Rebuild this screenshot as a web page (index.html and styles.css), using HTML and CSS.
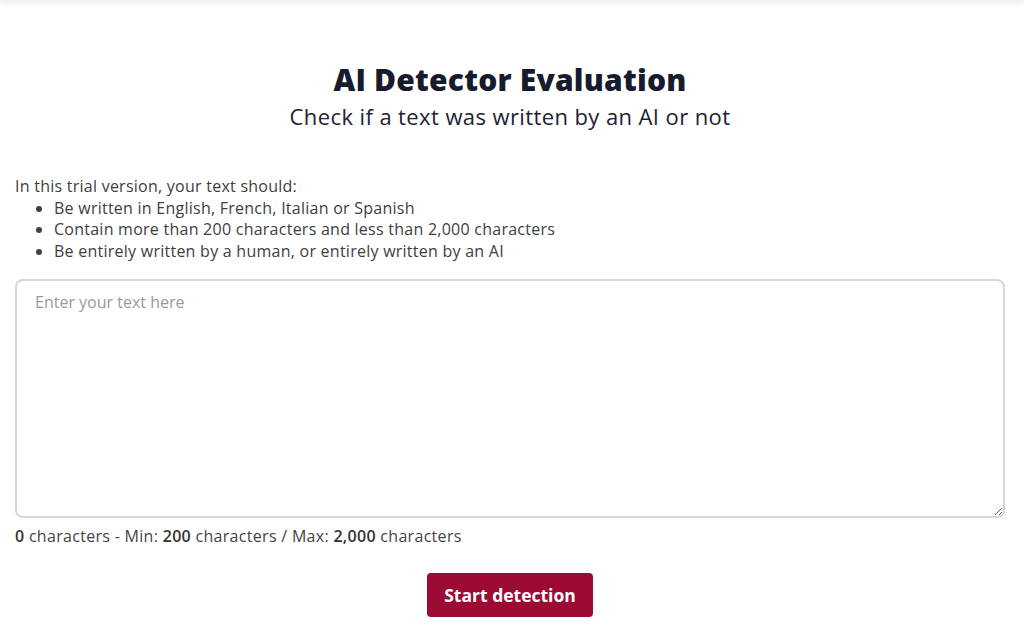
FILE: index.html
```html
<!DOCTYPE html>
<html lang="en">
<head>
<meta charset="utf-8">
<title>AI Detector Evaluation</title>
<link rel="stylesheet" href="styles.css">
</head>
<body>
<div class="topbar"></div>
<main class="page">
  <header class="hero">
    <h1 class="title">AI Detector Evaluation</h1>
    <p class="subtitle">Check if a text was written by an AI or not</p>
  </header>
  <section class="rules">
    <p class="rules-intro">In this trial version, your text should:</p>
    <ul class="rules-list">
      <li>Be written in English, French, Italian or Spanish</li>
      <li>Contain more than 200 characters and less than 2,000 characters</li>
      <li>Be entirely written by a human, or entirely written by an AI</li>
    </ul>
  </section>
  <textarea class="input" placeholder="Enter your text here"></textarea>
  <p class="counter"><b>0</b> characters - Min: <b>200</b> characters / Max: <b>2,000</b> characters</p>
  <div class="actions">
    <button class="btn" type="button">Start detection</button>
  </div>
</main>
</body>
</html>
```
FILE: styles.css
```css
html, body {
  margin: 0;
  padding: 0;
  background: #ffffff;
}
body {
  font-family: "Open Sans", "DejaVu Sans", sans-serif;
  color: #3d3d3d;
  overflow: hidden;
}
.topbar {
  height: 0;
  box-shadow: 0 0 6px 2px rgba(0,0,0,0.12);
}
.page {
  padding: 0 19px 0 15px;
}
.hero {
  text-align: center;
  padding-top: 58px;
}
.title {
  margin: 0;
  font-size: 30px;
  font-weight: 800;
  color: #161b2d;
  line-height: 44px;
  letter-spacing: 0.2px;
}
.subtitle {
  margin: 0;
  font-size: 22px;
  color: #1e2233;
  line-height: 28px;
  letter-spacing: 0.4px;
}
.rules {
  margin-top: 46px;
  font-size: 16px;
  line-height: 21.5px;
  letter-spacing: 0.25px;
  color: #404040;
}
.rules-intro {
  margin: 0;
}
.rules-list {
  margin: 0;
  padding-left: 39px;
}
.input {
  display: block;
  box-sizing: border-box;
  width: 100%;
  height: 239px;
  margin-top: 17px;
  border: 2px solid #d6d6d6;
  border-radius: 8px;
  padding: 10px 18px;
  font-family: inherit;
  font-size: 16px;
  color: #333;
  resize: vertical;
}
.input::placeholder {
  color: #9a9a9a;
}
.counter {
  margin: 8px 0 0;
  font-size: 16px;
  line-height: 20px;
  letter-spacing: 0.3px;
  color: #444;
}
.counter b {
  font-weight: 600;
  color: #333;
}
.actions {
  display: flex;
  justify-content: center;
  margin-top: 27px;
}
.btn {
  width: 166px;
  height: 44px;
  border: none;
  border-radius: 4px;
  background: #9d0a34;
  color: #fff;
  font-family: inherit;
  font-size: 17.5px;
  font-weight: 700;
  cursor: pointer;
}
```
